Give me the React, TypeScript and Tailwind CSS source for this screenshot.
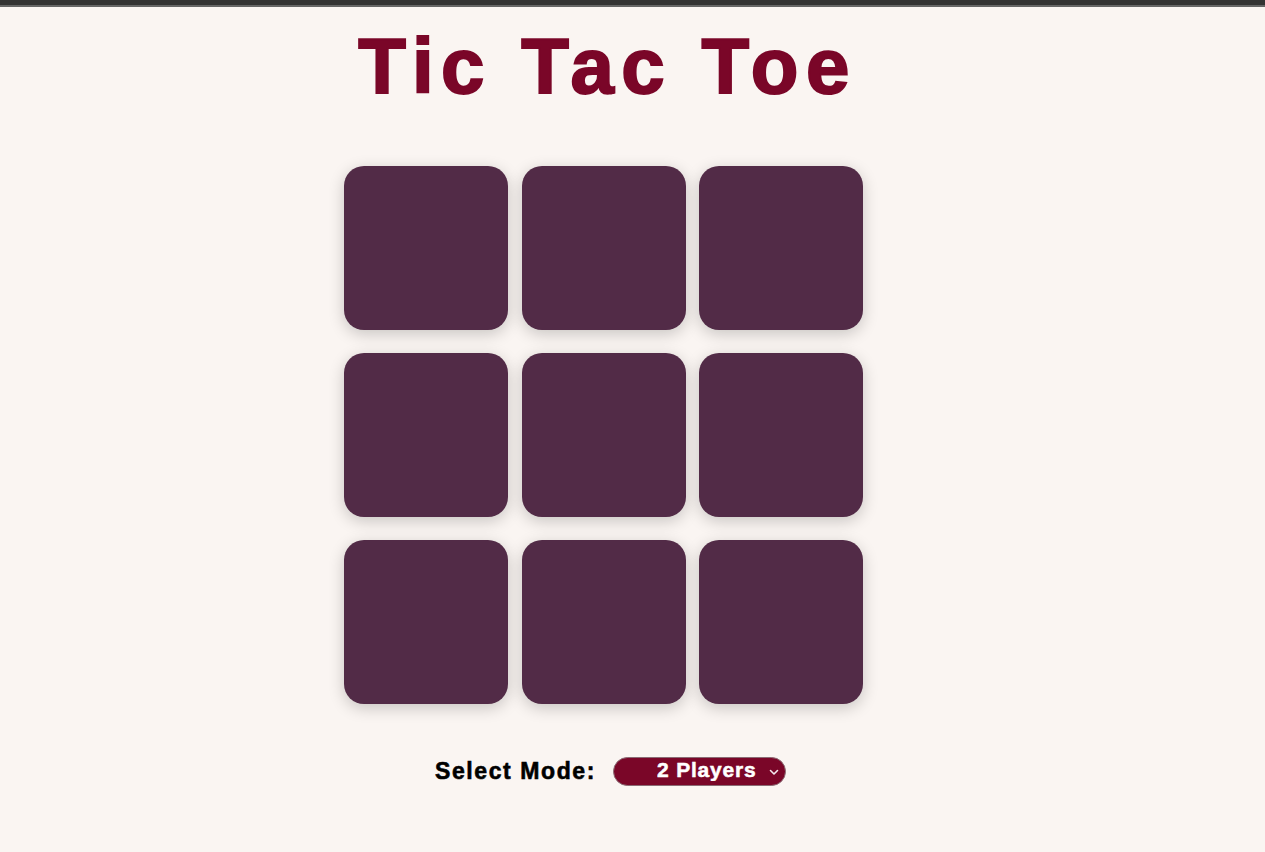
import React from "react";

export default function App() {
  const cells = Array.from({ length: 9 });
  return (
    <div className="min-h-[852px] w-full bg-[#faf5f2] font-['Liberation_Sans',Arial,sans-serif]">
      <div className="h-[5px] bg-[#333333]" />
      <div className="h-[2px] bg-[#666666]" />
      <div className="flex w-[1207px] flex-col items-center">
        <h1 className="mt-[14px] pl-[8px] text-[78px] font-bold leading-[90px] tracking-[7.5px] text-[#7a0628] [-webkit-text-stroke:2px_#7a0628]">
          Tic Tac Toe
        </h1>
        <div className="mt-[55px] grid grid-cols-[164px_164px_164px] gap-x-[13.5px] gap-y-[23px]">
          {cells.map((_, i) => (
            <button
              key={i}
              className="h-[164px] w-[164px] rounded-[20px] bg-[#522b47] shadow-[0_4px_16px_rgba(0,0,0,0.2)]"
            />
          ))}
        </div>
        <div className="mt-[50px] flex items-center pl-[14px]">
          <label className="text-[23px] font-bold tracking-[1.6px] text-black [-webkit-text-stroke:0.6px_#000]">
            Select Mode:
          </label>
          <div className="relative ml-[17px]">
            <select
              defaultValue="2"
              className="h-[29px] w-[173px] appearance-none rounded-full border border-[#8a6b74] bg-[#7a0628] py-0 pb-[2px] pl-[43px] text-[21px] leading-[22px] font-bold tracking-[0.8px] text-white outline-none [-webkit-text-stroke:0.5px_#fff]"
            >
              <option value="2">2 Players</option>
              <option value="1">1 Player</option>
            </select>
            <svg
              className="pointer-events-none absolute right-[7px] top-[12px]"
              width="10"
              height="7"
              viewBox="0 0 10 7"
              fill="none"
            >
              <path d="M1.5 1.5 L5 5 L8.5 1.5" stroke="#f3e9ee" strokeWidth="1.6" strokeLinecap="round" strokeLinejoin="round" />
            </svg>
          </div>
        </div>
      </div>
    </div>
  );
}
